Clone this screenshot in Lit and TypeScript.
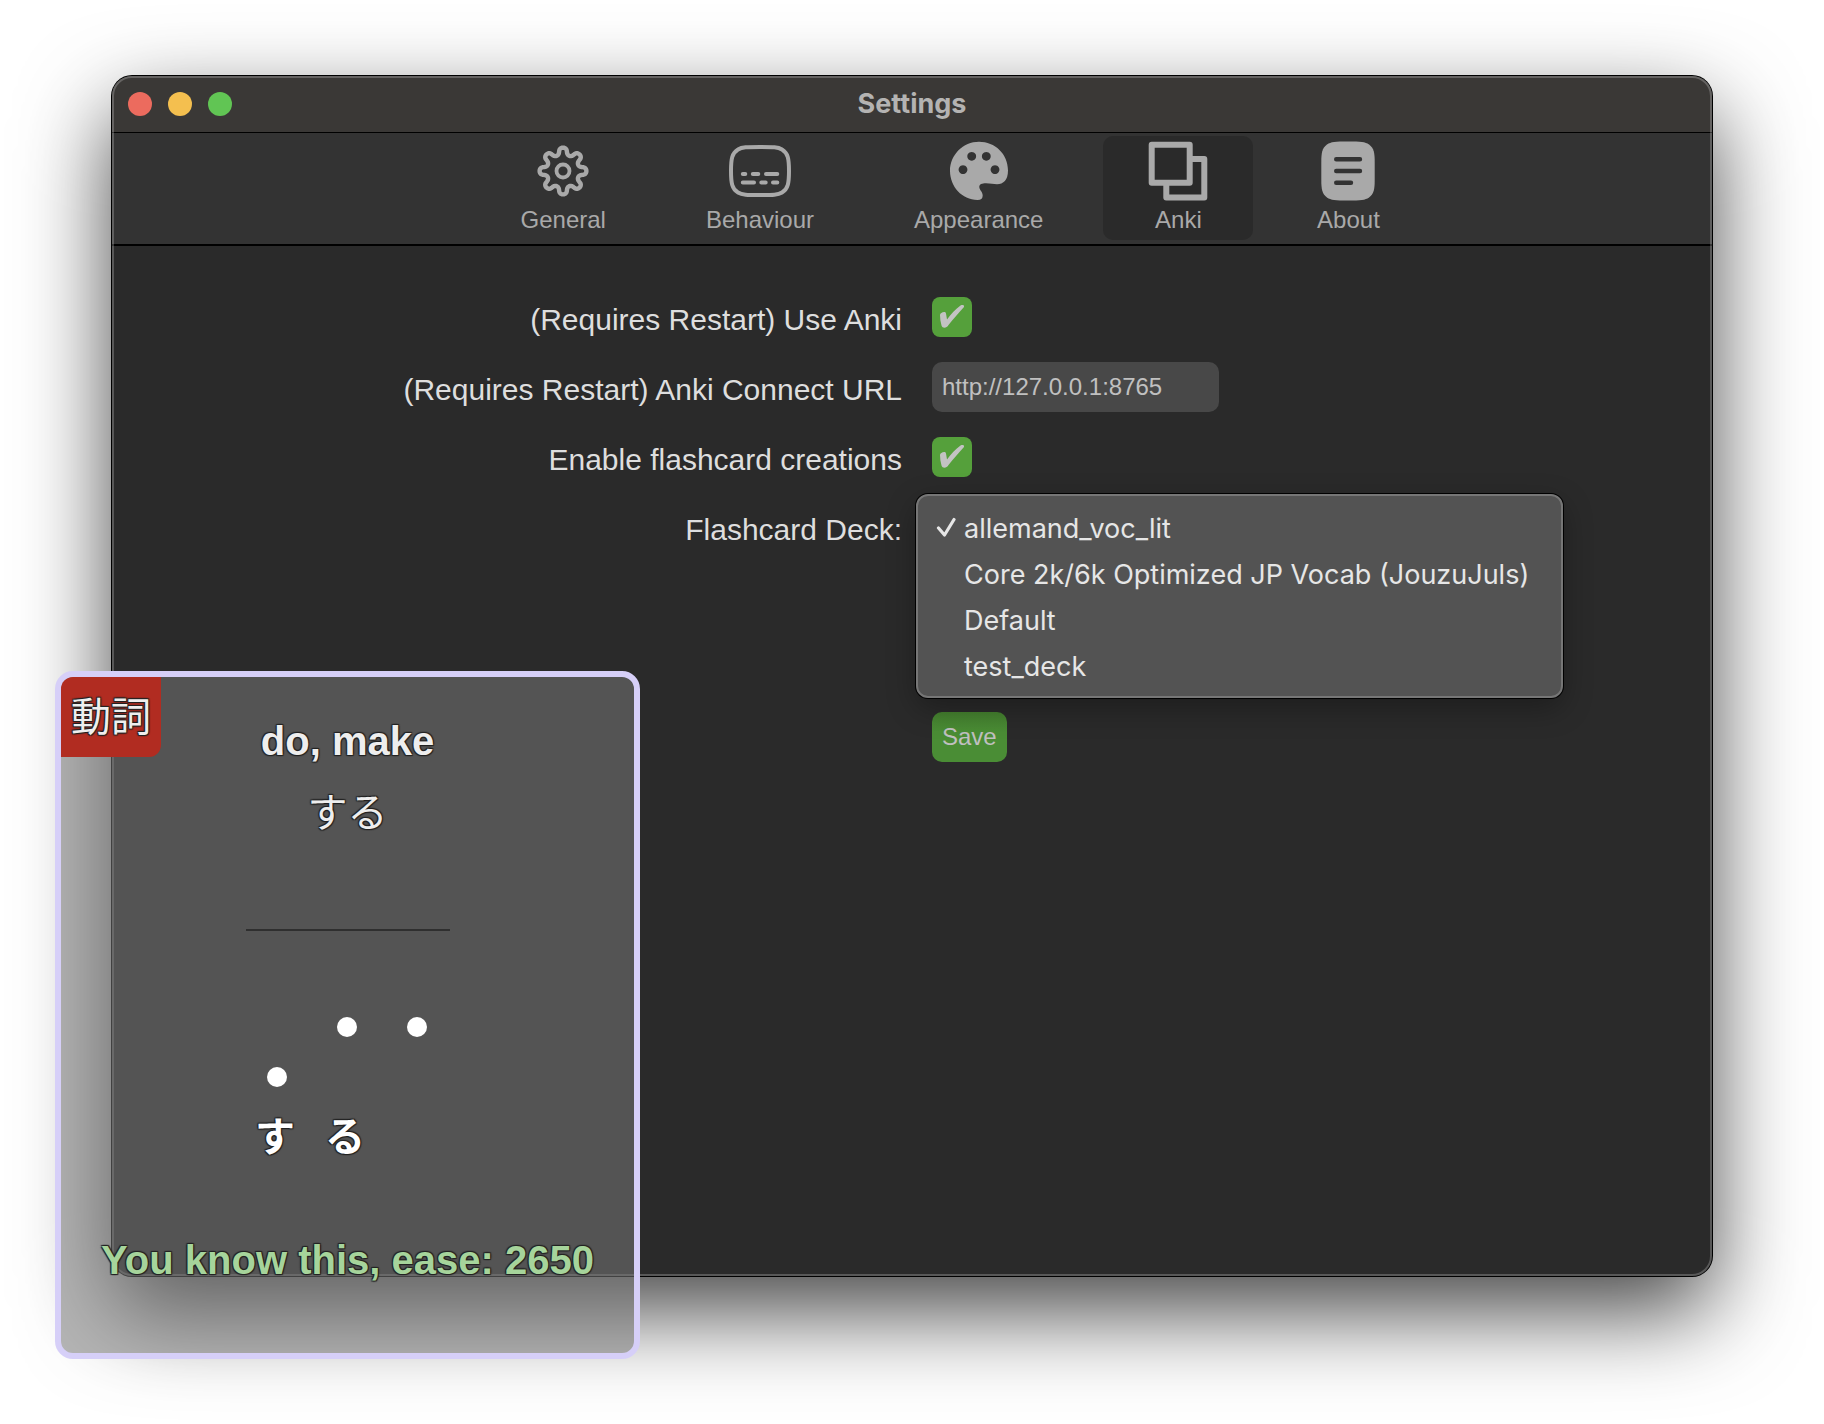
import { LitElement, html, svg, css } from "lit";
import { customElement, state } from "lit/decorators.js";
import { classMap } from "lit/directives/class-map.js";

/** Closed outline of an eight-lobed cog around (30, 30), with blunt, rounded lobes. */
function cogPath(): string {
  const steps = 192;
  const points: string[] = [];
  for (let i = 0; i < steps; i++) {
    const t = (i / steps) * Math.PI * 2;
    const r = 19.9 + 3.5 * Math.cos(8 * t);
    const a = t + 0.035 * Math.sin(16 * t);
    points.push(`${(30 + r * Math.sin(a)).toFixed(2)} ${(30 - r * Math.cos(a)).toFixed(2)}`);
  }
  return `M${points.join("L")}Z`;
}

const icons = {
  general: html`<svg class="icon" viewBox="0 0 60 60" aria-hidden="true">
    <g fill="none" stroke="currentColor" stroke-width="4.4" stroke-linejoin="round">
      <path d=${cogPath()} />
      <circle cx="30" cy="30" r="6.5" stroke-width="3.8" />
    </g>
  </svg>`,
  behaviour: html`<svg class="icon wide" viewBox="0 0 64 60" aria-hidden="true">
    <g fill="none" stroke="currentColor" stroke-width="4" stroke-linecap="round">
      <path d="M32 6C45 6 50 6 54 8.500C60 12 61 18 61 30S60 48 54 51.500C50 54 45 54 32 54S14 54 10 51.500C4 48 3 42 3 30S4 12 10 8.500C14 6 19 6 32 6Z" />
      <path d="M14.800 33H17.300M24.800 33H30.300M38 33H49.300M14.800 41.500H26M33.300 41.500H37.700M45 41.500H49.300" />
    </g>
  </svg>`,
  appearance: html`<svg class="icon" viewBox="0 0 60 60" aria-hidden="true">
    <path
      fill="currentColor"
      fill-rule="evenodd"
      d="M30 0.800C46 0.800 59 13 59 29.500C59 39 54.500 43.200 48 43.200C44.500 43.200 41.500 42.200 37 42.200C33 42.200 30.300 43 30.300 46C30.300 49 33.700 50.500 33.700 54.500C33.700 57.500 32 59 28.500 59C13 59 1 45.500 1 29.800C1 14 14 0.800 30 0.800Z
        M22.700 10.900a4.400 4.400 0 1 0 0.010 0ZM37.300 10.900a4.400 4.400 0 1 0 0.010 0ZM14 24.200a4.400 4.400 0 1 0 0.010 0ZM46 24.200a4.400 4.400 0 1 0 0.010 0Z"
    />
  </svg>`,
  anki: html`<svg class="icon" viewBox="0 0 60 60" aria-hidden="true">
    <g fill="none" stroke="currentColor" stroke-width="6" stroke-linejoin="round">
      <rect x="3.700" y="3.700" width="38" height="38" />
      <path d="M44 18H56.300V56.500H18.300V44" />
    </g>
  </svg>`,
  about: html`<svg class="icon" viewBox="0 0 60 60" aria-hidden="true">
    <path
      fill="currentColor"
      d="M30 0.500C43 0.500 47 0.800 51 3.500C56 7 56.700 12 56.700 21V39C56.700 48 56 53 51 56.500C47 59.200 43 59.500 30 59.500S13 59.200 9 56.500C4 53 3.300 48 3.300 39V21C3.300 12 4 7 9 3.500C13 0.800 17 0.500 30 0.500Z"
    />
    <path class="ink" fill="none" stroke-width="4.400" stroke-linecap="round" d="M18.200 18.300H42M18.200 30H42M18.200 41.700H33" />
  </svg>`,
};

type TabId = keyof typeof icons;

const tabs: { id: TabId; label: string }[] = [
  { id: "general", label: "General" },
  { id: "behaviour", label: "Behaviour" },
  { id: "appearance", label: "Appearance" },
  { id: "anki", label: "Anki" },
  { id: "about", label: "About" },
];

const decks = ["allemand_voc_lit", "Core 2k/6k Optimized JP Vocab (JouzuJuls)", "Default", "test_deck"];

@customElement("flash-card")
export class FlashCard extends LitElement {
  static styles = css`
    :host {
      display: block;
      box-sizing: border-box;
      border: 6px solid #d6cff8;
      border-radius: 18px;
      overflow: hidden;
      background: rgba(120, 120, 120, 0.545);
      font-family: "Liberation Sans", "Noto Sans CJK JP", sans-serif;
      font-size: 40px;
      line-height: 50px;
      color: #eee;
      text-align: center;
    }
    .badge {
      width: 100px;
      height: 80px;
      line-height: 80px;
      border-radius: 0 0 12px 0;
      background: #b12c21;
    }
    .outlined {
      text-shadow: -1px -1px 1px #222, 1px -1px 1px #222, -1px 1px 1px #222, 1px 1px 1px #222;
    }
    .meaning,
    .ease {
      margin: 0;
      font-size: 40px;
      font-weight: bold;
    }
    .meaning {
      margin-top: -41px;
    }
    .reading {
      margin: 22px 0 0;
    }
    .rule {
      width: 204px;
      height: 2px;
      margin: 91px auto 0;
      border: 0;
      background: #2f2f2f;
    }
    .pitch {
      display: block;
      width: 210px;
      height: 160px;
      margin: 76px auto 0;
      fill: #fff;
      font-weight: bold;
    }
    .ease {
      margin-top: 68px;
      color: #a6d49b;
    }
  `;

  render() {
    const morae = ["す", "る"];
    const dots = [
      [34, 70],
      [104, 20],
      [174, 20],
    ];
    return html`
      <div class="badge outlined" lang="ja">動詞</div>
      <h2 class="meaning outlined">do, make</h2>
      <p class="reading outlined" lang="ja">する</p>
      <hr class="rule" />
      <svg class="pitch outlined" viewBox="0 0 210 160" lang="ja">
        ${dots.map(([x, y]) => svg`<circle cx=${x} cy=${y} r="10" />`)}
        ${morae.map((m, i) => svg`<text x=${32 + i * 70} y="144" text-anchor="middle">${m}</text>`)}
      </svg>
      <p class="ease outlined">You know this, ease: 2650</p>
    `;
  }
}

@customElement("app-root")
export class AppRoot extends LitElement {
  @state() private tab: TabId = "anki";
  @state() private deck = decks[0];

  static styles = css`
    :host {
      display: flex;
      position: relative;
      box-sizing: border-box;
      min-height: 100vh;
      padding: 76px 112px 148px;
      background: #fff;
      font-family: "Liberation Sans", Arial, sans-serif;
      overflow: hidden;
    }
    .window {
      flex: 1;
      position: relative;
      display: flex;
      flex-direction: column;
      border-radius: 20px;
      background: #2a2a2a;
      box-shadow: 0 0 0 1px #000, 0 36px 90px rgba(0, 0, 0, 0.73);
    }
    .window::after {
      content: "";
      position: absolute;
      inset: 0;
      border: 2px solid rgba(255, 255, 255, 0.22);
      border-radius: 20px;
      pointer-events: none;
    }
    .titlebar {
      display: grid;
      grid-template-columns: 1fr auto 1fr;
      align-items: center;
      height: 56px;
      padding: 0 16px;
      border-bottom: 1px solid #000;
      border-radius: 20px 20px 0 0;
      background: #3a3836;
    }
    .lights {
      display: flex;
      gap: 16px;
    }
    .light {
      width: 24px;
      height: 24px;
      padding: 0;
      border: 0;
      border-radius: 50%;
    }
    .close {
      background: #ec6b5e;
    }
    .minimise {
      background: #f4bf4f;
    }
    .zoom {
      background: #61c554;
    }
    .title {
      margin: 0;
      font: 700 27px/32px Inter, sans-serif;
      color: #b4b3b2;
    }
    .toolbar {
      display: flex;
      justify-content: center;
      gap: 20px;
      padding: 3px 0 4px 80px;
      border-bottom: 2px solid #000;
      background: #333;
    }
    .tab {
      display: flex;
      flex-direction: column;
      align-items: center;
      gap: 5px;
      min-width: 150px;
      padding: 5px 40px 6px;
      border: 0;
      border-radius: 10px;
      background: none;
      color: #a9a9a9;
      font: 24px/28px "Liberation Sans", Arial, sans-serif;
    }
    .tab.active {
      background: #2a2a2a;
    }
    .icon {
      display: block;
      width: 60px;
      height: 60px;
    }
    .icon.wide {
      width: 64px;
    }
    .ink {
      stroke: #333;
    }
    .form {
      display: grid;
      grid-template-columns: 1fr 1fr;
      grid-auto-rows: 50px;
      gap: 20px;
      align-items: center;
      padding-top: 46px;
      color: #dedede;
      font-size: 30px;
    }
    .label {
      padding-top: 6px;
      text-align: right;
    }
    .field {
      position: relative;
      display: flex;
      padding-left: 10px;
    }
    .check {
      appearance: none;
      width: 40px;
      height: 40px;
      margin: 0;
      border-radius: 8px;
      background: #4a4a4a;
    }
    .check:checked {
      background: #55a03b;
    }
    .check:checked::before {
      content: "";
      display: block;
      width: 40px;
      height: 40px;
      background: #c3c3c3;
      clip-path: path("M8 18C8 15.500 13.500 13.500 14 16.500L15 22.500C19 17 23.500 12 28.500 8.500C30.500 7.500 32.500 8 32 10C27 15.500 21.500 21.500 16.500 28C14.500 31.500 10.500 31.500 9.500 28.500C8.500 25 8 21.500 8 18Z");
    }
    .text,
    .deck,
    .save {
      box-sizing: border-box;
      height: 50px;
      padding: 0 10px;
      border: 0;
      border-radius: 10px;
      color: #c0c0c0;
      font: 24px/28px "Liberation Sans", Arial, sans-serif;
    }
    .text,
    .deck {
      width: 287px;
      background: #484848;
    }
    .save {
      background: linear-gradient(#45812f, #4a8d35 40%);
    }
    .actions {
      grid-column: 2;
      grid-row: 7;
    }
    .menu {
      position: absolute;
      top: -8px;
      left: -6px;
      z-index: 1;
      display: flex;
      flex-direction: column;
      box-sizing: border-box;
      margin: 0;
      padding: 10px 32px 6px 18px;
      border: 2px solid #767676;
      border-radius: 12px;
      background: #535353;
      box-shadow: 0 0 0 1px #000, 0 10px 30px rgba(0, 0, 0, 0.3);
      color: #e6e6e6;
      font: 400 27px/46px Inter, sans-serif;
      list-style: none;
    }
    .option {
      display: flex;
      align-items: center;
      gap: 8px;
      white-space: nowrap;
    }
    .tick {
      width: 20px;
      height: 24px;
      visibility: hidden;
    }
    .option.chosen .tick {
      visibility: visible;
    }
    .card {
      position: absolute;
      left: 55px;
      bottom: 65px;
      z-index: 2;
      width: 585px;
      height: 688px;
    }
  `;

  private renderOption(name: string) {
    const chosen = name === this.deck;
    return html`<li
      class=${classMap({ option: true, chosen })}
      role="option"
      aria-selected=${chosen ? "true" : "false"}
      @click=${() => (this.deck = name)}
    >
      <svg class="tick" viewBox="0 0 20 24" aria-hidden="true">
        <path d="M2.500 11L8.500 18L18 2.500" fill="none" stroke="currentColor" stroke-width="3.2" stroke-linecap="round" stroke-linejoin="round" />
      </svg>
      <span>${name}</span>
    </li>`;
  }

  render() {
    return html`
      <main class="window">
        <header class="titlebar">
          <div class="lights">
            <button class="light close" aria-label="Close"></button>
            <button class="light minimise" aria-label="Minimise"></button>
            <button class="light zoom" aria-label="Zoom"></button>
          </div>
          <h1 class="title">Settings</h1>
        </header>
        <nav class="toolbar">
          ${tabs.map(
            (t) => html`<button class=${classMap({ tab: true, active: t.id === this.tab })} @click=${() => (this.tab = t.id)}>
              ${icons[t.id]}<span>${t.label}</span>
            </button>`
          )}
        </nav>
        <form class="form" @submit=${(e: Event) => e.preventDefault()}>
          <label class="label" for="use">(Requires Restart) Use Anki</label>
          <div class="field"><input class="check" id="use" type="checkbox" checked /></div>
          <label class="label" for="url">(Requires Restart) Anki Connect URL</label>
          <div class="field"><input class="text" id="url" type="text" value="http://127.0.0.1:8765" /></div>
          <label class="label" for="create">Enable flashcard creations</label>
          <div class="field"><input class="check" id="create" type="checkbox" checked /></div>
          <label class="label" for="deck">Flashcard Deck:</label>
          <div class="field">
            <select class="deck" id="deck">
              ${decks.map((d) => html`<option ?selected=${d === this.deck}>${d}</option>`)}
            </select>
            <ul class="menu" role="listbox" aria-label="Flashcard Deck">
              ${decks.map((d) => this.renderOption(d))}
            </ul>
          </div>
          <div class="field actions"><button class="save">Save</button></div>
        </form>
      </main>
      <flash-card class="card"></flash-card>
    `;
  }
}
